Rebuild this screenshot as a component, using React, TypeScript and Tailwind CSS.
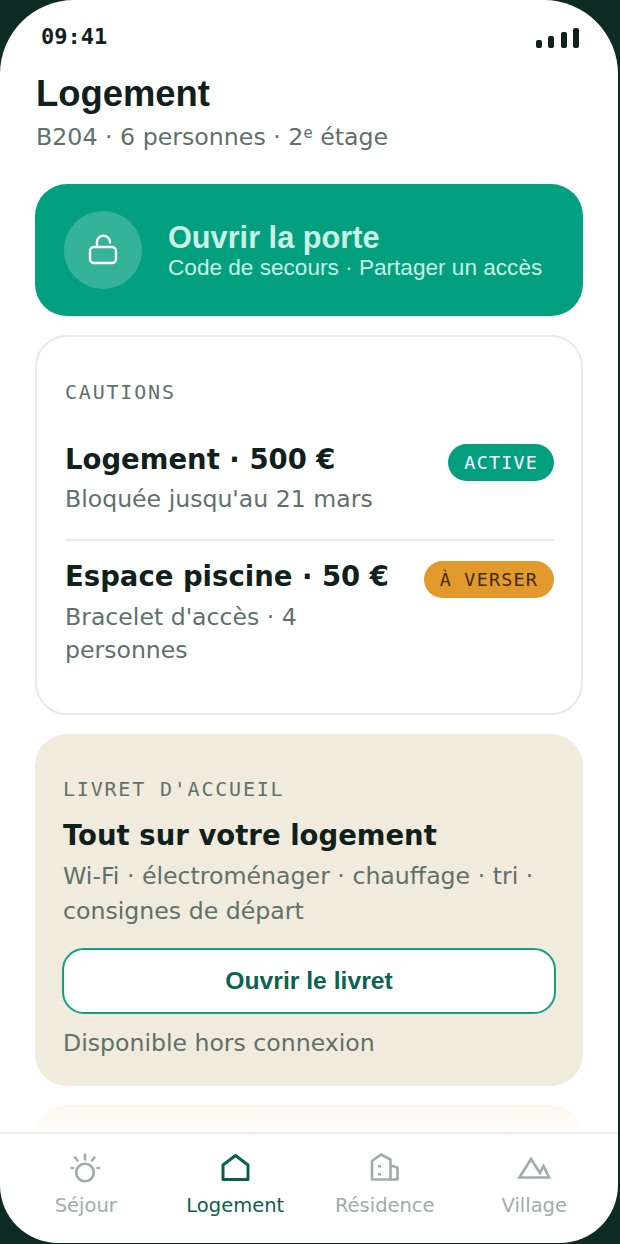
import React from 'react';

const sans = "font-['DejaVu_Sans',sans-serif]";

const SignalBars = () => (
  <div className="flex items-end gap-[6.5px]">
    <div className="h-[8px] w-[6px] rounded-[2px] bg-[#10211c]" />
    <div className="h-[12px] w-[6px] rounded-[2px] bg-[#10211c]" />
    <div className="h-[16px] w-[6px] rounded-[2px] bg-[#10211c]" />
    <div className="h-[20px] w-[6px] rounded-[2px] bg-[#10211c]" />
  </div>
);

const LockIcon = () => (
  <svg width="32" height="32" viewBox="0 0 32 32" fill="none" stroke="#ffffff" strokeWidth="2.4" strokeLinecap="round">
    <rect x="3" y="13" width="26" height="16" rx="4" />
    <path d="M10 13V8a6.500 6.500 0 0 1 13 0.500" />
  </svg>
);

const SunIcon = () => (
  <svg width="32" height="30" viewBox="0 0 32 30" fill="none" stroke="#9fadaa" strokeWidth="2.6" strokeLinecap="round">
    <circle cx="15" cy="19.500" r="8.800" />
    <path d="M15 1.500V6.500M5 4.500l2.500 3M24.500 4.500L22 7.500M1.500 15h1.500M27.500 15H29" />
  </svg>
);

const HouseIcon = () => (
  <svg width="32" height="30" viewBox="0 0 32 30" fill="none" stroke="#0b5f4d" strokeWidth="3" strokeLinejoin="round">
    <path d="M4 12L16.500 2.500L29 12V26.500H4z" />
  </svg>
);

const BuildingIcon = () => (
  <svg width="32" height="30" viewBox="0 0 32 30" fill="none" stroke="#9fadaa" strokeWidth="2.6" strokeLinejoin="round">
    <path d="M3 26.500V8L12 1.500L21.500 6.500V26.500zM21.500 12.500L28.500 14.500V26.500H21.500" />
    <path d="M10.500 12v2.500M10.500 20v2.500" strokeWidth="3" />
  </svg>
);

const MountainIcon = () => (
  <svg width="36" height="26" viewBox="0 0 36 26" fill="none" stroke="#9fadaa" strokeWidth="2.600">
    <path d="M3.500 22.500L15 4L24 18L27.500 11L33 22.500z" />
  </svg>
);

const NavItem = ({ icon, label, active }: { icon: React.ReactNode; label: string; active?: boolean }) => (
  <div className="flex flex-1 flex-col items-center">
    <div className="flex h-[30px] items-center justify-center">{icon}</div>
    <span className={`mt-[8px] text-[19.5px] leading-[30px] ${active ? 'text-[#0b5f4d]' : 'text-[#9fadaa]'}`}>{label}</span>
  </div>
);

export default function App() {
  return (
    <div className={`h-[1244px] w-[620px] overflow-hidden bg-[#0d2a23] pr-[2px] pb-[1px] ${sans}`}>
      <div className="flex h-full flex-col overflow-hidden rounded-t-[74px] rounded-b-[58px] bg-white">
        {/* status bar */}
        <div className="flex h-[72px] shrink-0 items-start justify-between pt-[23px] pr-[39px] pl-[41px]">
          <span className="font-['DejaVu_Sans_Mono',monospace] text-[22px] leading-[28px] font-bold text-[#10211c]">09:41</span>
          <div className="pt-[5px]">
            <SignalBars />
          </div>
        </div>

        {/* scrolling content */}
        <div className="flex min-h-0 flex-1 flex-col overflow-hidden px-[35px]">
          <h1 className="pl-px font-['Liberation_Sans',sans-serif] text-[36.4px] leading-[44px] font-bold text-[#10211c]">Logement</h1>
          <p className="mt-[5px] pl-px text-[23.7px] leading-[32px] text-[#5f716b]">
            B204 · 6 personnes · 2<sup className="text-[15px] leading-none">e</sup> étage
          </p>

          <div className="mt-[31px] flex h-[132px] shrink-0 items-center gap-[26px] rounded-[32px] bg-[#02a07f] pl-[29px]">
            <div className="flex h-[78px] w-[78px] items-center justify-center rounded-full bg-white/20">
              <LockIcon />
            </div>
            <div className="pt-px font-['Liberation_Sans',sans-serif]">
              <div className="text-[30.7px] leading-[34px] font-bold text-[#c9f2e5]">Ouvrir la porte</div>
              <div className="text-[22.6px] leading-[26px] text-[#c9f2e5]">Code de secours · Partager un accès</div>
            </div>
          </div>

          <div className="mt-[19px] shrink-0 rounded-[32px] border-2 border-[#e6eaea] pt-[42px] pr-[27px] pb-[46px] pl-[28px]">
            <div className="font-['DejaVu_Sans_Mono',monospace] text-[20px] leading-[26px] tracking-[1.8px] text-[#5f716b]">CAUTIONS</div>
            <div className="mt-[35px] flex items-start justify-between gap-[24px] border-b-2 border-[#eceeee] pb-[24px]">
              <div>
                <div className="text-[27.5px] leading-[38px] font-bold text-[#10211c]">Logement · 500 €</div>
                <div className="mt-[5px] text-[23.6px] leading-[32px] text-[#5f716b]">Bloquée jusqu'au 21 mars</div>
              </div>
              <span className="mt-[4px] shrink-0 rounded-full bg-[#02a07f] px-[16px] py-[5px] font-['DejaVu_Sans_Mono',monospace] text-[18.4px] leading-[27px] tracking-[1.2px] text-white">ACTIVE</span>
            </div>
            <div className="mt-[16px] flex items-start justify-between gap-[24px]">
              <div>
                <div className="text-[27.5px] leading-[38px] font-bold text-[#10211c]">Espace piscine · 50 €</div>
                <div className="mt-[6px] w-[300px] text-[23.6px] leading-[33px] text-[#5f716b]">Bracelet d'accès · 4 personnes</div>
              </div>
              <span className="mt-[4px] shrink-0 rounded-full bg-[#e39a2d] px-[16px] py-[5px] font-['DejaVu_Sans_Mono',monospace] text-[18.4px] leading-[27px] tracking-[1.2px] text-[#3d2a0c]">À VERSER</span>
            </div>
          </div>

          <div className="mt-[19px] shrink-0 rounded-[32px] bg-[#f1ebdd] px-[28px] pt-[42px] pb-[27px]">
            <div className="font-['DejaVu_Sans_Mono',monospace] text-[20px] leading-[26px] tracking-[1.8px] text-[#5f716b]">LIVRET D'ACCUEIL</div>
            <div className="mt-[14px] text-[27.5px] leading-[38px] font-bold text-[#10211c]">Tout sur votre logement</div>
            <div className="mt-[5px] text-[23.65px] leading-[35px] text-[#5f716b]">Wi-Fi · électroménager · chauffage · tri · consignes de départ</div>
            <div className="-mx-px mt-[19px] flex h-[66px] items-center justify-center rounded-[22px] border-2 border-[#12a083] bg-white font-['Liberation_Sans',sans-serif] text-[24.7px] font-bold text-[#0b6350]">Ouvrir le livret</div>
            <div className="mt-[13px] text-[23.6px] leading-[32px] text-[#5f716b]">Disponible hors connexion</div>
          </div>

          {/* next card, cut off by the tab bar */}
          <div className="mt-[19px] h-[60px] shrink-0 rounded-t-[32px] bg-gradient-to-b from-[#fdf7ec] to-white to-[50%]" />
        </div>

        {/* tab bar */}
        <div className="flex h-[111px] shrink-0 border-t-2 border-[#e8ecec] pt-[19px] pr-[9px] pl-[11px]">
          <NavItem icon={<SunIcon />} label="Séjour" />
          <NavItem icon={<HouseIcon />} label="Logement" active />
          <NavItem icon={<BuildingIcon />} label="Résidence" />
          <NavItem icon={<MountainIcon />} label="Village" />
        </div>
      </div>
    </div>
  );
}
